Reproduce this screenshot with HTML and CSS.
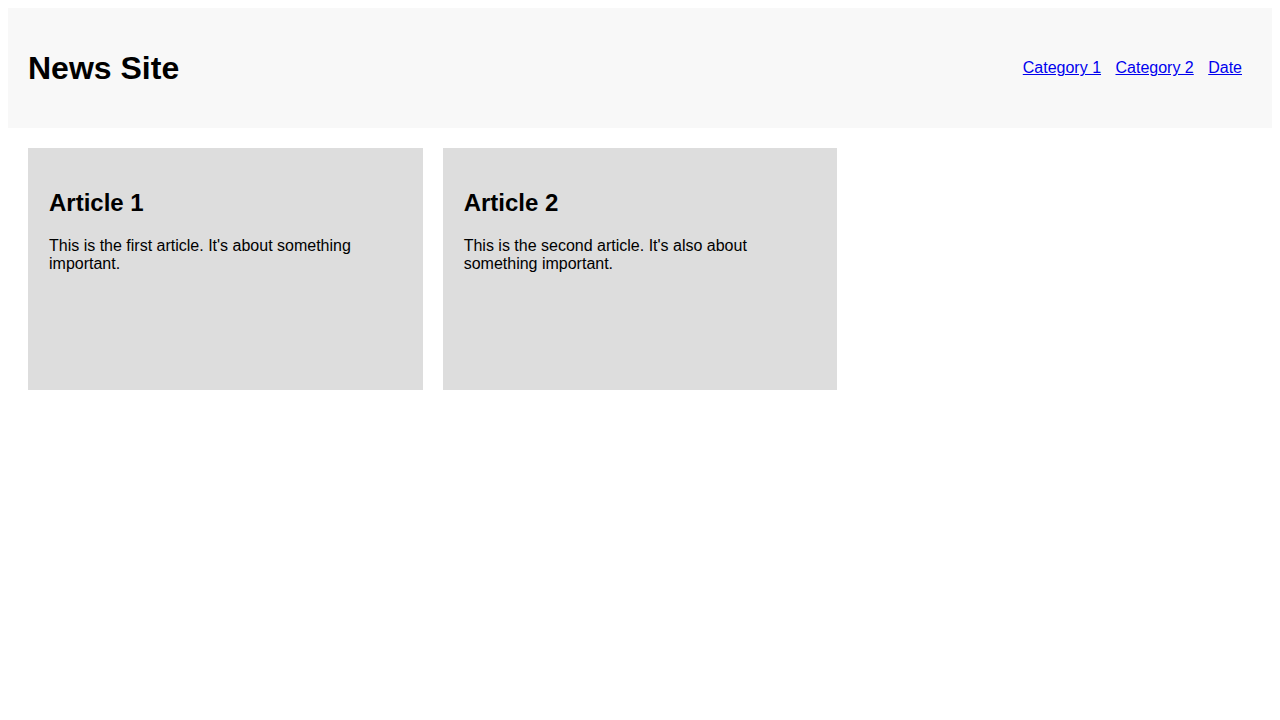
FILE: index.html
```html
<!DOCTYPE html>
<html lang="en">
<head>
<meta charset="utf-8">
<title>News Site</title>
<link rel="stylesheet" href="styles.css">
</head>
<body>
<header class="site-header">
  <h1 class="site-title">News Site</h1>
  <nav class="site-nav">
    <a href="#">Category 1</a>
    <a href="#">Category 2</a>
    <a href="#">Date</a>
  </nav>
</header>
<main class="articles">
  <article class="article">
    <h2 class="article-title">Article 1</h2>
    <p class="article-text">This is the first article. It's about something important.</p>
  </article>
  <article class="article">
    <h2 class="article-title">Article 2</h2>
    <p class="article-text">This is the second article. It's also about something important.</p>
  </article>
</main>
</body>
</html>
```
FILE: styles.css
```css
body {
  margin: 8px;
  font-family: "Liberation Sans", Arial, sans-serif;
  color: #000;
  background: #fff;
}

.site-header {
  display: flex;
  justify-content: space-between;
  align-items: center;
  padding: 20px;
  background: #f8f8f8;
}

.site-title {
  font-size: 32px;
  font-weight: bold;
  margin: 22.44px 0 20.44px;
}

.site-nav {
  font-size: 16px;
  margin-top: 1px;
}

.site-nav a {
  color: #0000ee;
  text-decoration: underline;
  margin-right: 10px;
}

.articles {
  display: grid;
  grid-template-columns: repeat(3, 1fr);
  gap: 20px;
  padding: 20px;
}

.article {
  box-sizing: border-box;
  min-height: 242px;
  padding: 20px;
  border: 1px solid #dddddd;
  background: #dddddd;
}

.article-title {
  font-size: 24px;
  font-weight: bold;
  margin: 19.92px 0;
}

.article-text {
  font-size: 16px;
  margin: 16px 0;
}
```
